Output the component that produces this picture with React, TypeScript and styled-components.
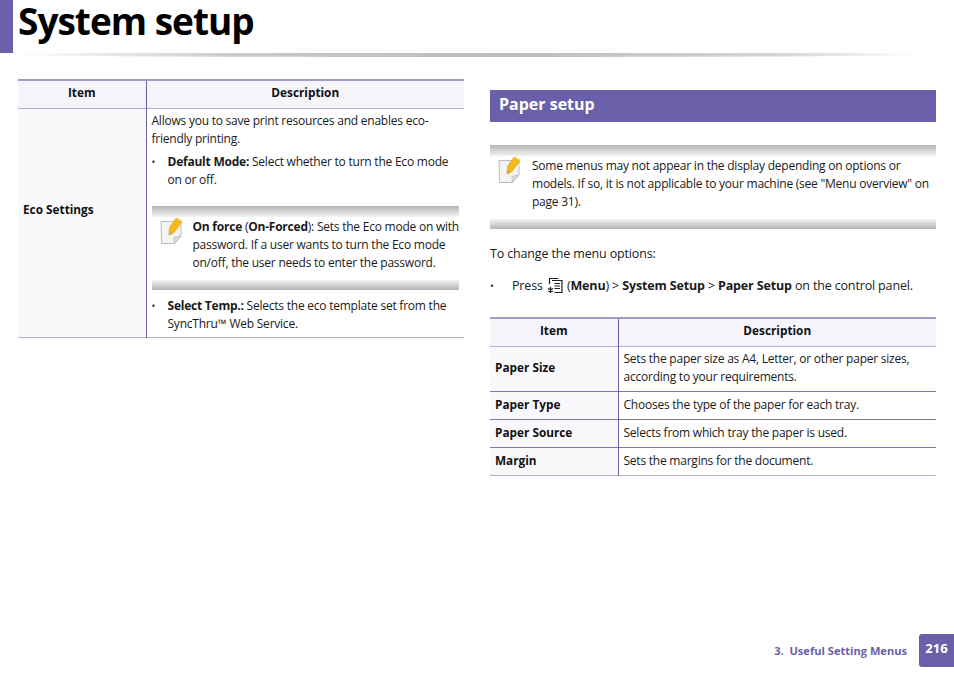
import React from 'react';
import styled, { createGlobalStyle } from 'styled-components';

const purple = '#6a60a9';
const bodyFont = '"Open Sans", "Noto Sans", sans-serif';

const GlobalStyle = createGlobalStyle`
  html, body { margin: 0; padding: 0; background: #fff; }
  body { font-family: ${bodyFont}; color: #1a1a1a; }
`;

const Page = styled.div`
  width: 954px;
  height: 675px;
  display: flex;
  flex-direction: column;
  overflow: hidden;
`;

const Header = styled.header`
  height: 53px;
  display: flex;
  gap: 5px;
`;

const HeaderTab = styled.div`
  width: 13px;
  background: ${purple};
`;

const Title = styled.h1`
  margin: 0;
  font-size: 37px;
  line-height: 41px;
  font-weight: 700;
  color: #000;
  letter-spacing: -1px;
`;

const Swoosh = styled.div`
  height: 4px;
  margin-left: 13px;
  width: 905px;
  background: linear-gradient(90deg, #fff 0%, #c9c9c9 25%, #bdbdbd 55%, #d5d5d5 85%, #fff 100%);
  border-radius: 0 0 50% 50%;
`;

const Columns = styled.main`
  display: grid;
  grid-template-columns: 446px 446px;
  column-gap: 26px;
  padding: 22px 18px 0;
  flex: 1;
  align-items: start;
`;

const Column = styled.section`
  display: flex;
  flex-direction: column;
`;

const Table = styled.table<{ $top?: number }>`
  width: 446px;
  table-layout: fixed;
  border-collapse: collapse;
  margin-top: ${p => p.$top ?? 0}px;
  font-size: 12px;
  line-height: 18px;
  letter-spacing: -0.23px;
`;

const HeadRow = styled.tr`
  height: 28px;
  background: #f5f4fa;
  border-top: 2px solid #a39cc9;
  border-bottom: 1px solid #b4aed4;
`;

const HeadCell = styled.th`
  font-weight: 700;
  font-size: 11.8px;
  letter-spacing: 0;
  padding: 0 0 5px;
  color: #111;
  &:first-child { border-right: 1px solid ${purple}; }
`;

const Row = styled.tr<{ $h: number; $strong?: boolean }>`
  height: ${p => p.$h}px;
  border-bottom: 1px solid ${p => (p.$strong ? '#7f76b8' : '#b4aed4')};
`;

const ItemCell = styled.td<{ $lift: number }>`
  background: #f9f9fc;
  border-right: 1px solid ${purple};
  font-weight: 700;
  font-size: 11.8px;
  letter-spacing: 0;
  padding: 0 5px ${p => p.$lift}px;
  color: #111;
`;

const DescCell = styled.td<{ $lift: number }>`
  padding: 0 5px ${p => p.$lift}px;
  vertical-align: middle;
`;

const EcoCell = styled.td`
  padding: 3px 5px 0;
  vertical-align: top;
`;

const Para = styled.p`
  margin: 0;
`;

const BulletList = styled.ul<{ $top: number; $bottom?: number }>`
  list-style: none;
  margin: ${p => p.$top}px 0 ${p => p.$bottom ?? 0}px;
  padding: 0;
`;

const Bullet = styled.li<{ $indent: number }>`
  position: relative;
  padding-left: ${p => p.$indent}px;
  &::before {
    content: '•';
    position: absolute;
    left: 0;
    font-size: 10px;
  }
`;

const Note = styled.div<{ $gap: number; $top?: number }>`
  display: flex;
  gap: ${p => p.$gap}px;
  margin-top: ${p => p.$top ?? 0}px;
  padding: 12px 0 18px 8px;
  background:
    linear-gradient(180deg, #b5b5b5, #f4f4f4) top / 100% 11px no-repeat,
    linear-gradient(180deg, #f4f4f4, #b5b5b5) bottom / 100% 10px no-repeat;
`;

const NoteText = styled.p`
  margin: 0;
  font-size: 12px;
  line-height: 18px;
  letter-spacing: -0.23px;
`;

const SectionHeading = styled.h2`
  margin: 11px 0 0;
  height: 32px;
  background: ${purple};
  color: #fff;
  font-size: 16px;
  font-weight: 700;
  line-height: 29px;
  padding-left: 9px;
`;

const Body = styled.div<{ $top: number }>`
  font-size: 12.5px;
  line-height: 18px;
  letter-spacing: -0.15px;
  margin-top: ${p => p.$top}px;
`;

const InlineIcon = styled.svg`
  vertical-align: -4px;
  margin: 0 3px 0 1px;
`;

const NoteGlyph = styled.svg`
  flex: none;
  margin-top: -1px;
`;

const Footer = styled.footer`
  height: 41px;
  display: flex;
  justify-content: flex-end;
  align-items: flex-start;
  gap: 12px;
`;

const FooterLabel = styled.span`
  color: ${purple};
  font-size: 11.1px;
  font-weight: 700;
  line-height: 16px;
  margin-top: 9px;
`;

const PageNumber = styled.div`
  width: 35px;
  height: 33px;
  background: ${purple};
  color: #fff;
  border-radius: 3px 0 0 3px;
  font-size: 13px;
  font-weight: 700;
  text-align: center;
  line-height: 29px;
`;

function NoteIcon() {
  return (
    <NoteGlyph width="24" height="28" viewBox="0 0 24 28">
      <path d="M1 4.500h20v14.500l-6.500 7.500H1.500z" fill="#f3f3f1" stroke="#bdbdbd" strokeWidth="1" />
      <path d="M21 19l-7 1.500.5 6z" fill="#dedede" stroke="#b8b8b8" strokeWidth="0.8" />
      <path d="M9.500 10.500L16 1l6 4-8.500 11-4.500 2z" fill="#f6b91c" stroke="#e3a512" strokeWidth="0.6" />
      <path d="M16 1l1-.8 5.500 3.600-.5 1.200z" fill="#fadc7c" />
      <path d="M9.500 14l-.8 4.200 4-1.800z" fill="#c9a35a" />
    </NoteGlyph>
  );
}

function MenuIcon() {
  return (
    <InlineIcon width="17" height="17" viewBox="0 0 17 17" fill="none" stroke="#222" strokeWidth="1.2">
      <path d="M2.500 7V1.500h9" />
      <path d="M5 3.500h10v12H7.500" />
      <path d="M7.500 6.500h5.500M7.500 9h5.500M7.500 11.500h5.500" />
      <path d="M3.500 10v6M1 11.500l5 3M6 11.500l-5 3" strokeWidth="1.3" />
    </InlineIcon>
  );
}

const paperRows = [
  { item: 'Paper Size', h: 45, itemLift: 4, descLift: 2, desc: 'Sets the paper size as A4, Letter, or other paper sizes, according to your requirements.' },
  { item: 'Paper Type', h: 28, itemLift: 2, descLift: 0, desc: 'Chooses the type of the paper for each tray.' },
  { item: 'Paper Source', h: 28, itemLift: 2, descLift: 0, desc: 'Selects from which tray the paper is used.' },
  { item: 'Margin', h: 28, itemLift: 2, descLift: 0, desc: 'Sets the margins for the document.' },
];

function TableHead() {
  return (
    <colgroup>
      <col style={{ width: 128 }} />
      <col />
    </colgroup>
  );
}

export default function App() {
  return (
    <Page>
      <GlobalStyle />
      <Header>
        <HeaderTab />
        <Title>System setup</Title>
      </Header>
      <Swoosh />
      <Columns>
        <Column>
          <Table>
            <TableHead />
            <thead>
              <HeadRow>
                <HeadCell>Item</HeadCell>
                <HeadCell>Description</HeadCell>
              </HeadRow>
            </thead>
            <tbody>
              <Row $h={229}>
                <ItemCell $lift={28}>Eco Settings</ItemCell>
                <EcoCell>
                  <Para>Allows you to save print resources and enables eco-friendly printing.</Para>
                  <BulletList $top={5} $bottom={17}>
                    <Bullet $indent={16}>
                      <b>Default Mode:</b> Select whether to turn the Eco mode on or off.
                    </Bullet>
                  </BulletList>
                  <Note $gap={9}>
                    <NoteIcon />
                    <NoteText>
                      <b>On force</b> (<b>On-Forced</b>): Sets the Eco mode on with password. If a user wants to turn the Eco mode on/off, the user needs to enter the password.
                    </NoteText>
                  </Note>
                  <BulletList $top={7}>
                    <Bullet $indent={16}>
                      <b>Select Temp.:</b> Selects the eco template set from the SyncThru™ Web Service.
                    </Bullet>
                  </BulletList>
                </EcoCell>
              </Row>
            </tbody>
          </Table>
        </Column>
        <Column>
          <SectionHeading>Paper setup</SectionHeading>
          <Note $gap={10} $top={23}>
            <NoteIcon />
            <NoteText>
              Some menus may not appear in the display depending on options or models. If so, it is not applicable to your machine (see "Menu overview" on page 31).
            </NoteText>
          </Note>
          <Body $top={16}>To change the menu options:</Body>
          <Body $top={14}>
            <BulletList $top={0}>
              <Bullet $indent={22}>
                Press <MenuIcon />(<b>Menu</b>) &gt; <b>System Setup</b> &gt; <b>Paper Setup</b> on the control panel.
              </Bullet>
            </BulletList>
          </Body>
          <Table $top={22}>
            <TableHead />
            <thead>
              <HeadRow>
                <HeadCell>Item</HeadCell>
                <HeadCell>Description</HeadCell>
              </HeadRow>
            </thead>
            <tbody>
              {paperRows.map((row, i) => (
                <Row key={row.item} $h={row.h} $strong={i < paperRows.length - 1}>
                  <ItemCell $lift={row.itemLift}>{row.item}</ItemCell>
                  <DescCell $lift={row.descLift}>{row.desc}</DescCell>
                </Row>
              ))}
            </tbody>
          </Table>
        </Column>
      </Columns>
      <Footer>
        <FooterLabel>3.&nbsp; Useful Setting Menus</FooterLabel>
        <PageNumber>216</PageNumber>
      </Footer>
    </Page>
  );
}
